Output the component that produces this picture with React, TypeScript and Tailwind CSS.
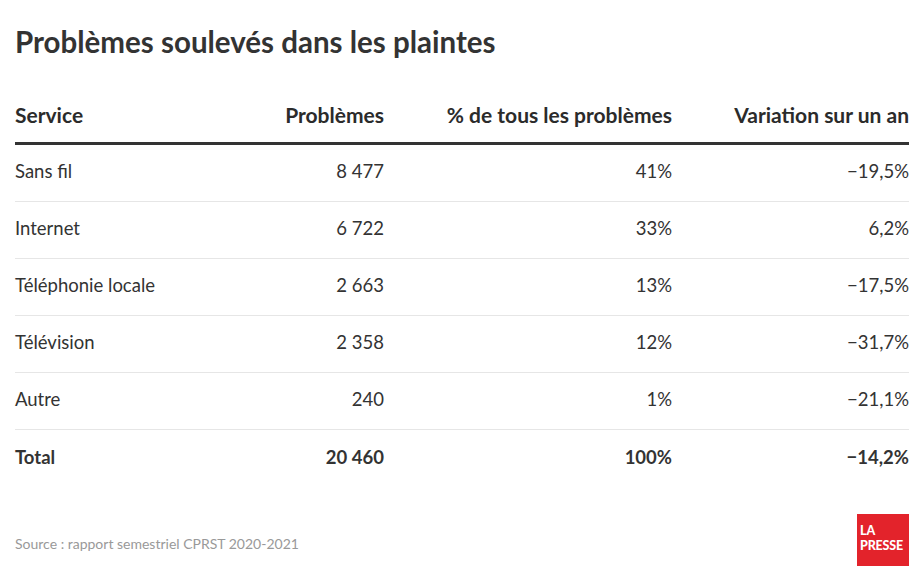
const rows = [
  { service: 'Sans fil', count: '8 477', share: '41%', change: '−19,5%' },
  { service: 'Internet', count: '6 722', share: '33%', change: '6,2%' },
  { service: 'Téléphonie locale', count: '2 663', share: '13%', change: '−17,5%' },
  { service: 'Télévision', count: '2 358', share: '12%', change: '−31,7%' },
  { service: 'Autre', count: '240', share: '1%', change: '−21,1%' },
];

export default function App() {
  return (
    <div
      className="w-[924px] h-[586px] bg-white px-[15px] text-[#333] overflow-hidden"
      style={{ fontFamily: 'Lato, "Open Sans", sans-serif' }}
    >
      <h1 className="pt-[24px] text-[29.5px] leading-[36px] font-bold text-[#333]">
        Problèmes soulevés dans les plaintes
      </h1>

      <div className="mt-[28px] w-[894px]">
        <div className="grid grid-cols-[200px_169px_288px_237px] h-[57px] items-center border-b-[3px] border-[#333] text-[21px] font-bold text-[#2b2b2b]">
          <div>Service</div>
          <div className="text-right">Problèmes</div>
          <div className="text-right">% de tous les problèmes</div>
          <div className="text-right">Variation sur un an</div>
        </div>

        {rows.map((r) => (
          <div
            key={r.service}
            className="grid grid-cols-[200px_169px_288px_237px] h-[57px] items-center border-b border-[#e6e6e6] text-[18.5px] pb-[2px]"
          >
            <div>{r.service}</div>
            <div className="text-right">{r.count}</div>
            <div className="text-right">{r.share}</div>
            <div className="text-right">{r.change}</div>
          </div>
        ))}

        <div className="grid grid-cols-[200px_169px_288px_237px] h-[57px] items-center text-[18.5px] font-bold pb-[2px]">
          <div>Total</div>
          <div className="text-right">20 460</div>
          <div className="text-right">100%</div>
          <div className="text-right">−14,2%</div>
        </div>
      </div>

      <div className="mt-[27px] w-[894px] flex justify-between items-center">
        <div className="pt-[7px] text-[14px] text-[#999]">Source : rapport semestriel CPRST 2020-2021</div>
        <div className="w-[52px] h-[52px] bg-[#e3232b] flex flex-col gap-[2px] pt-[11px] pl-[3px] text-white font-black leading-none text-[12.5px]">
          <span>LA</span>
          <span className="tracking-[-0.2px]">PRESSE</span>
        </div>
      </div>
    </div>
  );
}
